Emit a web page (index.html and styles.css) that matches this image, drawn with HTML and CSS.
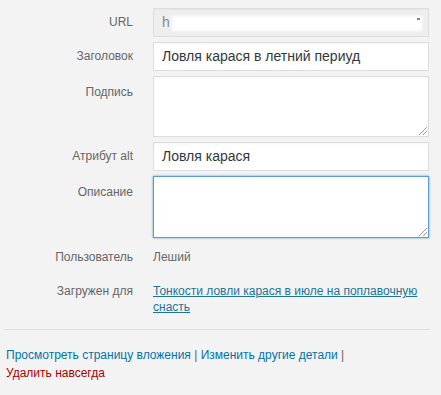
FILE: index.html
```html
<!DOCTYPE html>
<html lang="ru">
<head>
<meta charset="utf-8">
<link rel="stylesheet" href="styles.css">
</head>
<body>
<div class="panel">
  <div class="row">
    <div class="label">URL</div>
    <div class="field input readonly"><span class="url-text">h</span><span class="redact"></span><span class="mark"></span></div>
  </div>
  <div class="row">
    <div class="label">Заголовок</div>
    <div class="field input">Ловля карася в летний периуд</div>
  </div>
  <div class="row">
    <div class="label top">Подпись</div>
    <div class="field textarea caption"><span class="grip"></span></div>
  </div>
  <div class="row">
    <div class="label">Атрибут alt</div>
    <div class="field input">Ловля карася</div>
  </div>
  <div class="row">
    <div class="label top">Описание</div>
    <div class="field textarea focus"><span class="grip"></span></div>
  </div>
  <div class="row info first">
    <div class="label">Пользователь</div>
    <div class="value">Леший</div>
  </div>
  <div class="row info">
    <div class="label">Загружен для</div>
    <div class="value"><a href="#" class="link">Тонкости ловли карася в июле на поплавочную снасть</a></div>
  </div>
  <hr class="sep">
  <div class="actions">
    <a href="#" class="action">Просмотреть страницу вложения</a> | <a href="#" class="action">Изменить другие детали</a> |<br>
    <a href="#" class="delete">Удалить навсегда</a>
  </div>
</div>
</body>
</html>
```
FILE: styles.css
```css
html, body {
  margin: 0;
  padding: 0;
  background: #f3f3f3;
}
body {
  font-family: "Liberation Sans", Arial, sans-serif;
  font-size: 12px;
  color: #666;
}
.panel {
  padding: 8px 12px 0 5px;
}
.row {
  display: flex;
  gap: 20px;
  margin-bottom: 5px;
}
.label {
  width: 128px;
  flex: none;
  text-align: right;
  line-height: 29px;
  color: #666;
}
.label.top {
  line-height: 18px;
  padding-top: 7px;
}
.field {
  box-sizing: border-box;
  width: 276px;
  flex: none;
  background: #fff;
  border: 1px solid #ddd;
  position: relative;
  box-shadow: inset 0 1px 2px rgba(0,0,0,0.04);
}
.input {
  height: 29px;
  line-height: 27px;
  padding: 0 8px;
  font-size: 14px;
  color: #32373c;
}
.readonly {
  background: #eee;
  color: #777;
  overflow: hidden;
  white-space: nowrap;
}
.url-text {
  color: #888;
}
.redact {
  position: absolute;
  left: 18px;
  top: 7px;
  width: 250px;
  height: 15px;
  background: #fff;
  filter: blur(1.5px);
}
.mark {
  position: absolute;
  right: 8px;
  top: 9px;
  width: 3px;
  height: 2px;
  background: #888;
}
.textarea {
  height: 62px;
}
.textarea.caption {
  height: 61px;
}
.textarea.focus {
  border-color: #5b9dd9;
  box-shadow: 0 0 2px rgba(30,140,190,0.8);
}
.grip {
  position: absolute;
  right: 1px;
  bottom: 1px;
  width: 8px;
  height: 8px;
  background: linear-gradient(135deg, transparent 45%, #999 45%, #999 52%, transparent 52%, transparent 70%, #999 70%, #999 77%, transparent 77%);
}
.row.info {
  margin-bottom: 0;
}
.row.info.first {
  margin-top: 11px;
  margin-bottom: 18px;
}
.info .label,
.info .value {
  line-height: 16px;
}
.value {
  width: 276px;
  color: #666;
}
.link {
  color: #21759b;
  text-decoration: underline;
}
.sep {
  border: 0;
  border-top: 1px solid #ddd;
  margin: 14px 0 16px 0;
  width: 425px;
}
.actions {
  font-size: 12px;
  line-height: 18px;
  color: #666;
  padding-left: 1px;
}
.action {
  color: #0073aa;
  text-decoration: none;
}
.delete {
  color: #a00;
  text-decoration: none;
}
```
